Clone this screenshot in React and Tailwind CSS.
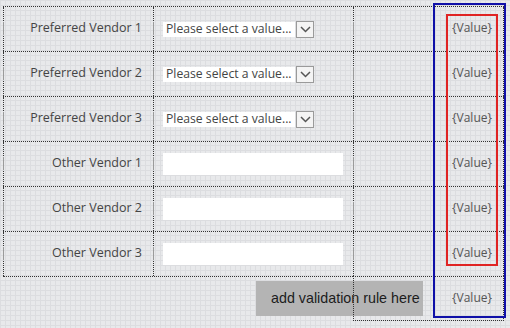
import React from 'react';

const rows = [
  { label: 'Preferred Vendor 1', kind: 'select' },
  { label: 'Preferred Vendor 2', kind: 'select' },
  { label: 'Preferred Vendor 3', kind: 'select' },
  { label: 'Other Vendor 1', kind: 'input' },
  { label: 'Other Vendor 2', kind: 'input' },
  { label: 'Other Vendor 3', kind: 'input' },
];

function Handle() {
  // small column resize marker sitting on the dotted divider
  return <span className="absolute left-[-1px] top-[15px] h-[13px] w-px bg-[#9a9a9a]" />;
}

function SelectBox() {
  return (
    <div className="flex items-center">
      <div className="flex h-[15px] w-[132px] items-center bg-white pl-[3px] text-[12.2px] leading-none text-[#444]">
        Please select a value...
      </div>
      <div className="ml-px flex h-[17px] w-[18px] items-center justify-center border border-[#9a9a9a] bg-[#f4f4f4]">
        <svg width="11" height="7" viewBox="0 0 11 7" fill="none">
          <path d="M1 1l4.5 4.5L10 1" stroke="#555" strokeWidth="1.5" />
        </svg>
      </div>
    </div>
  );
}

export default function App() {
  return (
    <div
      className="relative h-[328px] w-[510px] overflow-hidden bg-[#e8e9eb] bg-[linear-gradient(#dcdde0_1px,transparent_1px),linear-gradient(90deg,#dcdde0_1px,transparent_1px)] bg-[size:5px_5px] pl-[3px] pt-[6px]"
      style={{ fontFamily: '"Open Sans", "Noto Sans", sans-serif' }}
    >
      <div className="relative z-10 w-[501px]">
        {rows.map((r) => (
          <div key={r.label} className="flex h-[45px] border-t border-dotted border-[#333]">
            <div className="relative flex w-[150px] items-center justify-end border-l border-dotted border-[#333] pb-[2px] pr-[11px] text-[12.5px] text-[#444]">
              <Handle />
              {r.label}
            </div>
            <div className="relative flex w-[200px] items-center border-l border-dotted border-[#333] pl-[9px]">
              <Handle />
              {r.kind === 'select' ? (
                <SelectBox />
              ) : (
                <div className="h-[22px] w-[180px] bg-white" />
              )}
            </div>
            <div className="relative flex w-[151px] items-center justify-end border-x border-dotted border-[#333] pb-[2px] pr-[11px] text-[12px] text-[#555]">
              <Handle />
              {'{Value}'}
            </div>
          </div>
        ))}
        <div className="flex h-[45px]">
          <div className="w-[350px] border-t border-dotted border-[#333]" />
          <div className="flex w-[151px] items-center justify-end border border-dotted border-[#333] pb-[2px] pr-[11px] text-[12px] text-[#555]">
            {'{Value}'}
          </div>
        </div>
      </div>

      <div
        className="absolute left-[256px] top-[281px] z-0 flex h-[35px] w-[167px] items-center bg-[#b4b4b4] pl-[15px] text-[14.3px] text-[#1c1c1c]"
        style={{ fontFamily: '"Liberation Sans", Arial, sans-serif' }}
      >
        add validation rule here
      </div>

      <div className="pointer-events-none absolute left-[433px] top-[3px] z-20 h-[315px] w-[73px] border-2 border-[#1010a8]" />
      <div className="pointer-events-none absolute left-[446px] top-[14px] z-20 h-[252px] w-[52px] border-2 border-[#e02424]" />
    </div>
  );
}
